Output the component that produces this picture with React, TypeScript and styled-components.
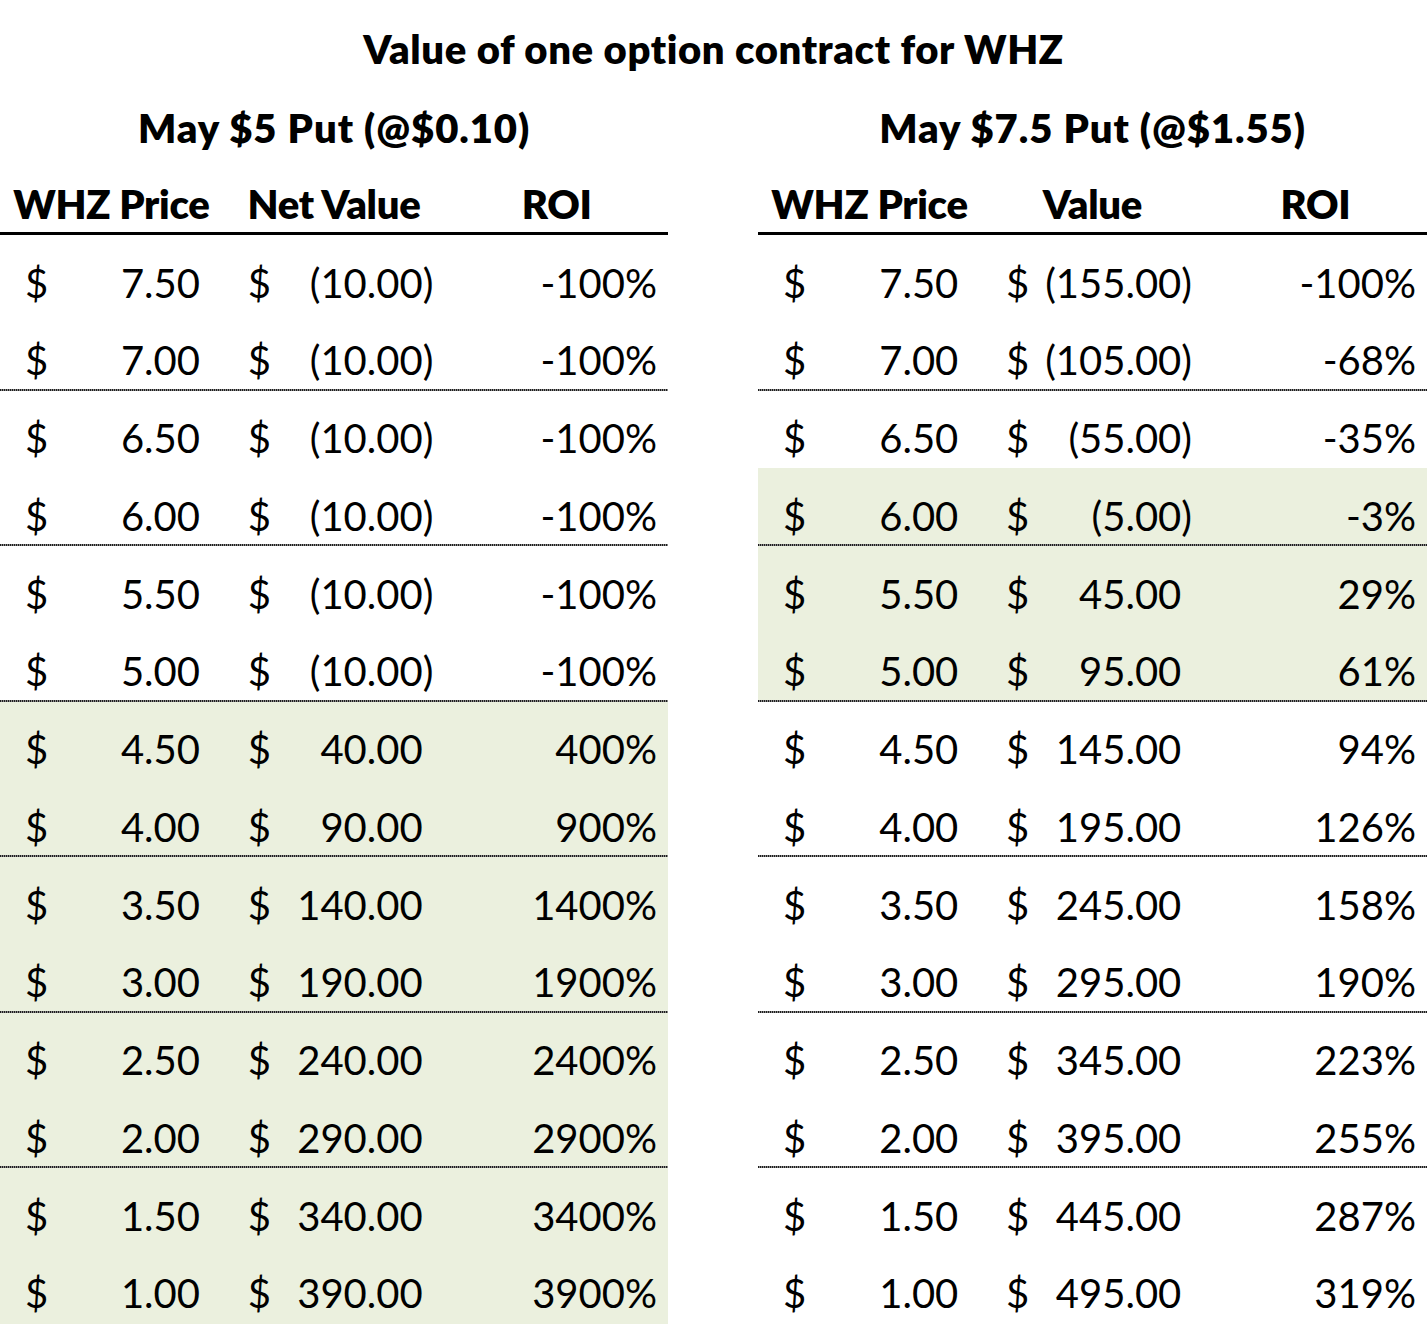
import React from "react";
import styled, { createGlobalStyle } from "styled-components";

const GlobalStyle = createGlobalStyle`
  html, body {
    margin: 0;
    padding: 0;
    background: #ffffff;
  }
`;

const Page = styled.div`
  width: 1427px;
  height: 1325px;
  overflow: hidden;
  background: #ffffff;
  color: #000000;
  font-family: Lato, "Open Sans", "Liberation Sans", sans-serif;
  font-size: 40px;
  line-height: 48px;
`;

const Title = styled.h1`
  margin: 0;
  padding-top: 25px;
  font-size: 40px;
  line-height: 48px;
  font-weight: 800;
  letter-spacing: 0.6px;
  text-align: center;
  white-space: nowrap;
`;

const Tables = styled.div`
  display: grid;
  grid-template-columns: 668px 1fr;
  column-gap: 90px;
  margin-top: 31px;
`;

const Block = styled.section`
  display: flex;
  flex-direction: column;
`;

const BlockTitle = styled.h2`
  margin: 0;
  font-size: 40px;
  line-height: 48px;
  font-weight: 800;
  letter-spacing: 0.9px;
  text-align: center;
  white-space: nowrap;
`;

const HeadRow = styled.div`
  display: grid;
  grid-template-columns: repeat(3, 1fr);
  margin-top: 28px;
  padding-bottom: 4px;
  border-bottom: 3px solid #000000;
`;

const HeadCell = styled.div`
  text-align: center;
  font-weight: 800;
  letter-spacing: -0.3px;
  white-space: nowrap;
`;

const Row = styled.div<{ $shaded: boolean; $divider: boolean }>`
  display: grid;
  grid-template-columns: repeat(3, 1fr);
  align-items: end;
  box-sizing: border-box;
  height: 77.75px;
  padding-bottom: 6.25px;
  background-color: ${(p) => (p.$shaded ? "#EBF0DE" : "transparent")};
  background-image: ${(p) =>
    p.$divider
      ? "repeating-linear-gradient(90deg, #1e1e1e 0 1px, #8a8a8a 1px 2px)"
      : "none"};
  background-size: 100% 2px;
  background-position: left bottom;
  background-repeat: no-repeat;
`;

const MoneyCell = styled.div`
  display: flex;
  justify-content: space-between;
  padding: 0 12px 0 25px;
  white-space: nowrap;
`;

const Hidden = styled.span`
  visibility: hidden;
`;

const PctCell = styled.div`
  text-align: right;
  padding-right: 11px;
  white-space: nowrap;
`;

type Line = { price: number; value: number; roi: string; shaded: boolean };

const fmt = (n: number) => {
  const s = Math.abs(n).toFixed(2);
  return n < 0 ? `(${s})` : s;
};

const Money = ({ n }: { n: number }) => (
  <MoneyCell>
    <span>$</span>
    <span>
      {fmt(n)}
      {n >= 0 && <Hidden>)</Hidden>}
    </span>
  </MoneyCell>
);

const prices = [7.5, 7, 6.5, 6, 5.5, 5, 4.5, 4, 3.5, 3, 2.5, 2, 1.5, 1];

const leftLines: Line[] = prices.map((p, i) => {
  const v = Math.max(0, 5 - p) * 100 - 10;
  const roi = Math.round((v / 10) * 100);
  return { price: p, value: v, roi: `${roi}%`, shaded: i >= 6 };
});

const rightRois = ["-100%", "-68%", "-35%", "-3%", "29%", "61%", "94%", "126%", "158%", "190%", "223%", "255%", "287%", "319%"];

const rightLines: Line[] = prices.map((p, i) => {
  const v = Math.max(0, 7.5 - p) * 100 - 155;
  return { price: p, value: v, roi: rightRois[i], shaded: i >= 3 && i <= 5 };
});

const OptionTable = ({ title, valueLabel, lines }: { title: string; valueLabel: string; lines: Line[] }) => (
  <Block>
    <BlockTitle>{title}</BlockTitle>
    <HeadRow>
      <HeadCell>WHZ Price</HeadCell>
      <HeadCell>{valueLabel}</HeadCell>
      <HeadCell>ROI</HeadCell>
    </HeadRow>
    {lines.map((l, i) => (
      <Row key={i} $shaded={l.shaded} $divider={i % 2 === 1 && i < lines.length - 1}>
        <Money n={l.price} />
        <Money n={l.value} />
        <PctCell>{l.roi}</PctCell>
      </Row>
    ))}
  </Block>
);

export default function App() {
  return (
    <>
      <GlobalStyle />
      <Page>
        <Title>Value of one option contract for WHZ</Title>
        <Tables>
          <OptionTable title="May $5 Put (@$0.10)" valueLabel="Net Value" lines={leftLines} />
          <OptionTable title="May $7.5 Put (@$1.55)" valueLabel="Value" lines={rightLines} />
        </Tables>
      </Page>
    </>
  );
}
